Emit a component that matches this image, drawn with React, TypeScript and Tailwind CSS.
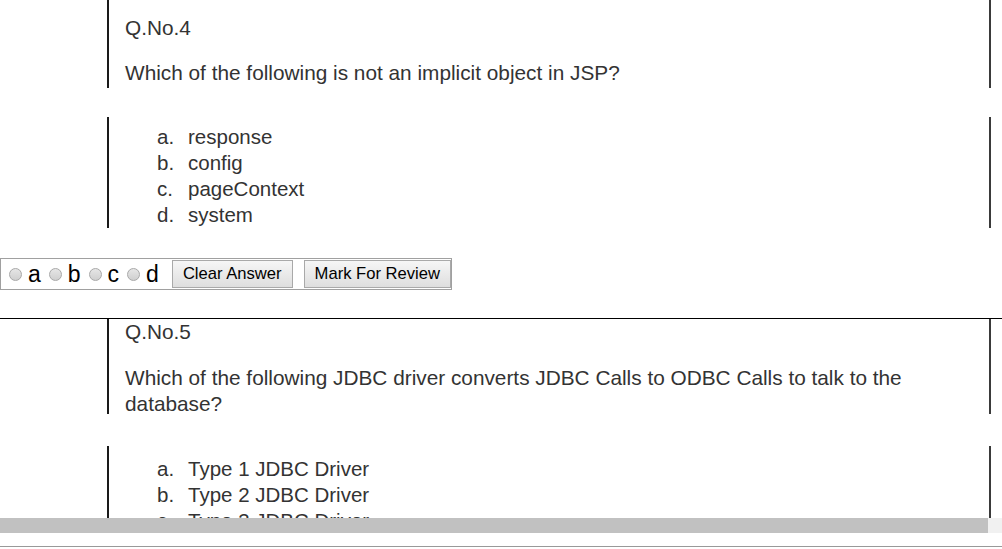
import React from 'react';

// ── Question image panels ──────────────────────────────────────────────────
function Panel({ className, children }: { className?: string; children: React.ReactNode }) {
    return (
        <div className={'ml-[107px] w-[884px] border-l-2 border-l-[#1a1a1a] border-r-2 border-r-[#3a3a3a] ' + (className || '')}>
            {children}
        </div>
    );
}

function Options({ items }: { items: string[] }) {
    return (
        <div className="flex flex-col">
            {items.map((t, i) => (
                <div key={i} className="flex h-[26px] items-center text-[20.5px] leading-[26px] text-[#333]">
                    <span className="w-[31px] pl-[48px] box-content">{'abcd'[i]}.</span>
                    <span>{t}</span>
                </div>
            ))}
        </div>
    );
}

function Radio({ label }: { label: string }) {
    return (
        <label className="flex shrink-0 items-center">
            <span className="ml-[8px] mr-[6px] h-[13px] w-[13px] rounded-full border border-[#a8a8a8] bg-gradient-to-b from-[#e6e6e6] to-[#cfcfcf]" />
            <span className="text-[23px] leading-none text-black">{label}</span>
        </label>
    );
}

function Btn({ children }: { children: React.ReactNode }) {
    return (
        <button className="h-[28px] shrink-0 whitespace-nowrap border border-[#a9a9a9] bg-gradient-to-b from-[#f6f6f6] to-[#dedede] px-[10px] text-[16.6px] leading-none text-black">
            {children}
        </button>
    );
}

export default function App() {
    return (
        <div className="h-[549px] w-[1002px] overflow-hidden bg-white font-['Liberation_Sans',Arial,sans-serif]">
            {/* Q.No.4 */}
            <Panel className="h-[88px] pl-4 text-[#333]">
                <div className="pt-[16px] text-[20.8px] leading-[24px]">Q.No.4</div>
                <div className="pt-[21px] text-[20.8px] leading-[24px]">Which of the following is not an implicit object in JSP?</div>
            </Panel>
            <Panel className="mt-[29px] h-[111px] pt-[7px]">
                <Options items={['response', 'config', 'pageContext', 'system']} />
            </Panel>

            {/* answer row */}
            <div className="mt-[30px] flex h-[32px] w-[452px] items-center border border-[#a0a0a0]">
                <Radio label="a" />
                <Radio label="b" />
                <Radio label="c" />
                <Radio label="d" />
                <div className="ml-[13px] shrink-0"><Btn>Clear Answer</Btn></div>
                <div className="ml-[11px] shrink-0"><Btn>Mark For Review</Btn></div>
            </div>

            <div className="mt-[28px] h-px w-full bg-black" />

            {/* Q.No.5 */}
            <Panel className="h-[95px] pl-4 text-[#333]">
                <div className="pt-[1px] text-[20.8px] leading-[24px]">Q.No.5</div>
                <div className="pt-[21px] text-[20.8px] leading-[26px]">
                    Which of the following JDBC driver converts JDBC Calls to ODBC Calls to talk to the database?
                </div>
            </Panel>
            <Panel className="mt-[32px] h-[72px] overflow-hidden pt-[10px]">
                <Options items={['Type 1 JDBC Driver', 'Type 2 JDBC Driver', 'Type 3 JDBC Driver', 'Type 4 JDBC Driver']} />
            </Panel>

            {/* horizontal scrollbar */}
            <div className="flex h-[15px] w-full">
                <div className="w-[988px] bg-[#c1c1c1]" />
                <div className="flex-1 bg-[#f1f1f1]" />
            </div>
            <div className="mt-[13px] h-px w-full bg-[#999]" />
        </div>
    );
}
